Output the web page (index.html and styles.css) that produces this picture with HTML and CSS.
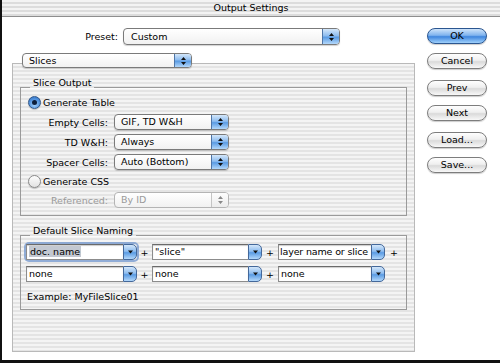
FILE: index.html
```html
<!DOCTYPE html>
<html lang="en">
<head>
  <meta charset="UTF-8">
  <meta name="viewport" content="width=device-width, initial-scale=1.0">
  <title>Output Settings</title>
  <link rel="stylesheet" href="styles.css">
</head>
<body>
  <div class="window">
    <div class="titlebar">Output Settings</div>
    <div class="content">
      <div class="main">
        <div class="presetRow">
          <span class="presetLabel">Preset:</span>
          <div class="popup preset">
            <span class="value">Custom</span>
            <span class="arrows"><svg width="7" height="10" viewBox="0 0 7 10"><path d="M1 4 L3.5 1 L6 4 Z M1 6 L3.5 9 L6 6 Z" fill="#111"/></svg></span>
          </div>
        </div>
        <div class="popup slices">
          <span class="value">Slices</span>
          <span class="arrows"><svg width="7" height="10" viewBox="0 0 7 10"><path d="M1 4 L3.5 1 L6 4 Z M1 6 L3.5 9 L6 6 Z" fill="#111"/></svg></span>
        </div>

        <div class="panel">
          <fieldset class="group output">
            <legend>Slice Output</legend>
            <div class="radioRow first">
              <span class="radio on"></span>
              <span>Generate Table</span>
            </div>
            <div class="fieldRow first">
              <span class="rowLabel">Empty Cells:</span>
              <div class="popup small">
                <span class="value">GIF, TD W&amp;H</span>
                <span class="arrows"><svg width="7" height="10" viewBox="0 0 7 10"><path d="M1 4 L3.5 1 L6 4 Z M1 6 L3.5 9 L6 6 Z" fill="#111"/></svg></span>
              </div>
            </div>
            <div class="fieldRow">
              <span class="rowLabel">TD W&amp;H:</span>
              <div class="popup small">
                <span class="value">Always</span>
                <span class="arrows"><svg width="7" height="10" viewBox="0 0 7 10"><path d="M1 4 L3.5 1 L6 4 Z M1 6 L3.5 9 L6 6 Z" fill="#111"/></svg></span>
              </div>
            </div>
            <div class="fieldRow">
              <span class="rowLabel">Spacer Cells:</span>
              <div class="popup small">
                <span class="value">Auto (Bottom)</span>
                <span class="arrows"><svg width="7" height="10" viewBox="0 0 7 10"><path d="M1 4 L3.5 1 L6 4 Z M1 6 L3.5 9 L6 6 Z" fill="#111"/></svg></span>
              </div>
            </div>
            <div class="radioRow second">
              <span class="radio"></span>
              <span>Generate CSS</span>
            </div>
            <div class="fieldRow disabled">
              <span class="rowLabel">Referenced:</span>
              <div class="popup small off">
                <span class="value">By ID</span>
                <span class="arrows"><svg width="7" height="10" viewBox="0 0 7 10"><path d="M1 4 L3.5 1 L6 4 Z M1 6 L3.5 9 L6 6 Z" fill="#888"/></svg></span>
              </div>
            </div>
          </fieldset>

          <fieldset class="group naming">
            <legend>Default Slice Naming</legend>
            <div class="nameRow">
              <div class="combo w1 focus">
                <span class="field"><span class="selected">doc. name</span></span>
                <span class="drop"><svg width="7" height="6" viewBox="0 0 7 6"><path d="M1 1.5 L6 1.5 L3.5 4.5 Z" fill="#111"/></svg></span>
              </div>
              <span class="plus p1">+</span>
              <div class="combo w2">
                <span class="field">"slice"</span>
                <span class="drop"><svg width="7" height="6" viewBox="0 0 7 6"><path d="M1 1.5 L6 1.5 L3.5 4.5 Z" fill="#111"/></svg></span>
              </div>
              <span class="plus p2">+</span>
              <div class="combo w3">
                <span class="field tight">layer name or slice</span>
                <span class="drop"><svg width="7" height="6" viewBox="0 0 7 6"><path d="M1 1.5 L6 1.5 L3.5 4.5 Z" fill="#111"/></svg></span>
              </div>
              <span class="plus p3">+</span>
            </div>
            <div class="nameRow second">
              <div class="combo w1">
                <span class="field">none</span>
                <span class="drop"><svg width="7" height="6" viewBox="0 0 7 6"><path d="M1 1.5 L6 1.5 L3.5 4.5 Z" fill="#111"/></svg></span>
              </div>
              <span class="plus p1">+</span>
              <div class="combo w2">
                <span class="field">none</span>
                <span class="drop"><svg width="7" height="6" viewBox="0 0 7 6"><path d="M1 1.5 L6 1.5 L3.5 4.5 Z" fill="#111"/></svg></span>
              </div>
              <span class="plus p2">+</span>
              <div class="combo w3">
                <span class="field">none</span>
                <span class="drop"><svg width="7" height="6" viewBox="0 0 7 6"><path d="M1 1.5 L6 1.5 L3.5 4.5 Z" fill="#111"/></svg></span>
              </div>
            </div>
            <div class="example">Example: MyFileSlice01</div>
          </fieldset>
        </div>
      </div>

      <div class="buttons">
        <div class="btnGroup">
          <div class="btn default">OK</div>
          <div class="btn">Cancel</div>
        </div>
        <div class="btnGroup">
          <div class="btn">Prev</div>
          <div class="btn">Next</div>
        </div>
        <div class="btnGroup">
          <div class="btn">Load...</div>
          <div class="btn">Save...</div>
        </div>
      </div>
    </div>
  </div>
</body>
</html>
```

FILE: styles.css
```css
* { box-sizing: border-box; }
body { margin: 0; font-family: 'DejaVu Sans', sans-serif; font-size: 9.5px; color: #000; background: #fff; }
.window { width: 500px; height: 363px; border-left: 2px solid #111; border-bottom: 3px solid #111; background: #fff; display: flex; flex-direction: column; }
.titlebar { height: 17px; border-bottom: 1px solid #8e8e8e; background: repeating-linear-gradient(#f3f3f3 0 2px, #dcdcdc 2px 4px); text-align: center; line-height: 16px; }
.content { display: flex; gap: 12px; padding-left: 10px; }
.main { width: 403px; display: flex; flex-direction: column; }

/* preset + slices popups */
.presetRow { display: flex; align-items: center; gap: 5px; margin-top: 11px; }
.presetLabel { width: 106px; text-align: right; }
.popup { display: flex; height: 16px; border: 1px solid #7a7a7a; border-radius: 4px; background: linear-gradient(#ffffff, #f1f1f1); box-shadow: 0 1px 1px rgba(0,0,0,0.18); overflow: hidden; }
.popup .value { flex: 1; padding-left: 6px; line-height: 14px; white-space: nowrap; }
.popup .arrows { width: 17px; display: flex; align-items: center; justify-content: center; border-left: 1px solid #4f76a8; background: linear-gradient(#d4e7fa, #8dbcef 45%, #5a9be3 55%, #b3d8fb); }
.preset { width: 217px; height: 17px; }
.preset .value { padding-left: 7px; line-height: 15px; }
.slices { position: relative; z-index: 1; width: 170px; height: 15px; margin: 8px 0 0 10px; }
.slices .value { line-height: 13px; }
.small { width: 115px; }
.popup.off { border-color: #b4b4b4; box-shadow: none; }
.popup.off .value { color: #9a9a9a; }
.popup.off .arrows { border-left-color: #c4c4c4; background: linear-gradient(#fdfdfd, #ececec); }

/* striped panel */
.panel { margin-top: -5px; height: 289px; border: 1px solid #b9b9b9; background: repeating-linear-gradient(#f4f4f4 0 2px, #e4e4e4 2px 4px); padding: 0 7px; }
.group { margin: 0; padding: 0; border: 1px solid #9a9a9a; min-width: 0; box-shadow: inset 0 1px 0 rgba(255,255,255,0.6); }
.group legend { margin-left: 9px; padding: 0 3px 8px; line-height: 10px; }
.output { margin-top: 14px; padding-bottom: 7px; }
.naming { margin-top: 10px; padding-bottom: 5px; }

.radioRow { display: flex; align-items: center; gap: 2px; height: 13px; padding-left: 7px; }
.radioRow.second { margin-top: 5px; }
.radio { width: 13px; height: 13px; border-radius: 50%; border: 1px solid #8a8a8a; background: linear-gradient(#fdfdfd, #e2e2e2); box-shadow: 0 1px 1px rgba(0,0,0,0.2); display: flex; align-items: center; justify-content: center; }
.radio.on { border-color: #2f5688; background: radial-gradient(circle at 50% 70%, #a6d2fb, #4f90dc 60%, #2a6cc0); }
.radio.on::after { content: ''; width: 5px; height: 5px; border-radius: 50%; background: #0d1e3a; }

.fieldRow { display: flex; align-items: center; gap: 6px; margin-top: 4px; }
.fieldRow.first { margin-top: 5px; }
.rowLabel { width: 87px; text-align: right; }
.fieldRow.disabled .rowLabel { color: #9a9a9a; }

/* slice naming combos */
.nameRow { display: flex; align-items: center; padding-left: 5px; }
.nameRow.second { margin-top: 6px; }
.combo { display: flex; height: 16px; }
.combo .field { flex: 1; border: 1px solid #8c8c8c; border-top-color: #6a6a6a; border-right: none; background: #fff; box-shadow: inset 0 1px 1px rgba(0,0,0,0.2); padding-left: 2px; line-height: 14px; white-space: nowrap; overflow: hidden; }
.combo .field.tight { padding-left: 1px; letter-spacing: -0.15px; }
.combo .drop { width: 14px; display: flex; align-items: center; justify-content: center; border: 1px solid #44689a; border-radius: 0 5px 5px 0; background: linear-gradient(#d4e7fa, #8dbcef 45%, #5a9be3 55%, #b3d8fb); }
.combo.focus { border-radius: 3px; box-shadow: 0 0 0 2px rgba(112,150,205,0.75); }
.selected { background: #c3c8d1; padding: 0 1px; }
.w1 { width: 111px; }
.w2 { width: 110px; }
.w3 { width: 107px; }
.plus { text-align: center; }
.p1 { width: 15px; }
.p2 { width: 16px; }
.p3 { width: 18px; }
.example { margin-top: 8px; height: 14px; line-height: 14px; padding-left: 6px; }

/* push buttons */
.buttons { display: flex; flex-direction: column; width: 60px; }
.btnGroup { display: flex; flex-direction: column; gap: 9px; margin-top: 11px; }
.btn { height: 16px; border-radius: 8px; border: 1px solid #7d7d7d; background: linear-gradient(#fefefe, #efefef 45%, #dadada 55%, #f8f8f8); text-align: center; line-height: 14px; box-shadow: 0 1px 1px rgba(0,0,0,0.2); }
.btn.default { border-color: #2b5690; background: linear-gradient(#cfe4fa, #7fb3ee 45%, #3f86de 55%, #9fd0fb); }
```
